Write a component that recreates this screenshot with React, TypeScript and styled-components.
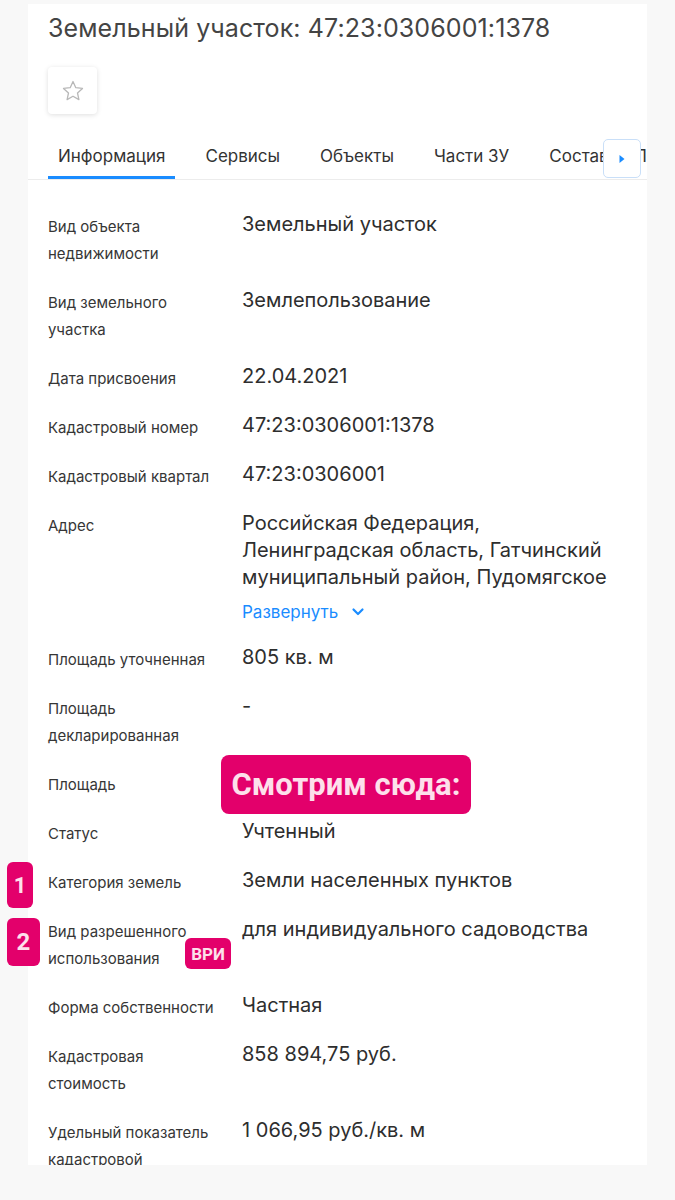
import React from 'react';
import styled, { createGlobalStyle } from 'styled-components';

const GlobalStyle = createGlobalStyle`
  html, body {
    margin: 0;
    padding: 0;
    background: #f8f8f8;
  }
  body {
    font-family: Inter, "Noto Sans", "Liberation Sans", sans-serif;
    color: #333;
  }
`;

const Page = styled.div`
  width: 675px;
  height: 1200px;
  padding: 4px 28px 0;
  box-sizing: border-box;
  background: #f8f8f8;
  overflow: hidden;
`;

const Card = styled.div`
  background: #fff;
  height: 1161px;
  clip-path: inset(0 0 0 -30px);
`;

const Header = styled.div`
  padding: 8px 20px 0;
`;

const Title = styled.h1`
  margin: 0;
  font-size: 25px;
  line-height: 32px;
  font-weight: 400;
  color: #444;
  letter-spacing: 0.1px;
`;

const StarButton = styled.button`
  margin-top: 23px;
  width: 49px;
  height: 47px;
  border: 0;
  border-radius: 4px;
  background: #fff;
  box-shadow: 0 1px 5px rgba(0, 0, 0, 0.13);
  display: flex;
  align-items: center;
  justify-content: center;
  padding: 0;
`;

const TabsWrap = styled.div`
  position: relative;
  margin-top: 19px;
  border-bottom: 1px solid #ececec;
`;

const TabList = styled.div`
  display: flex;
  gap: 20px;
  padding-left: 20px;
  white-space: nowrap;
  overflow: hidden;
`;

const Tab = styled.div<{ $active?: boolean }>`
  padding: 12px 10px 9px;
  font-size: 17px;
  line-height: 22px;
  color: #333;
  border-bottom: 3px solid ${(p) => (p.$active ? '#1a8cff' : 'transparent')};
`;

const ScrollButton = styled.button`
  position: absolute;
  left: 575px;
  top: 6px;
  width: 38px;
  height: 39px;
  border: 1px solid #c9dff8;
  border-radius: 5px;
  background: #fff;
  display: flex;
  align-items: center;
  justify-content: center;
  padding: 0;
`;

const InfoList = styled.div`
  padding: 33px 20px 0;
  display: flex;
  flex-direction: column;
  gap: 22px;
`;

const Row = styled.div`
  position: relative;
  display: grid;
  grid-template-columns: 194px 1fr;
`;

const Label = styled.div`
  font-size: 15px;
  line-height: 27px;
  color: #363636;
  padding-right: 24px;
`;

const Value = styled.div`
  font-size: 20px;
  line-height: 27px;
  color: #2e2e2e;
  margin-top: -2px;
`;

const ExpandLink = styled.div`
  margin-top: 9px;
  font-size: 17px;
  line-height: 24px;
  color: #1a8cff;
  display: flex;
  align-items: center;
  gap: 13px;
`;

const Callout = styled.div`
  position: absolute;
  left: 173px;
  top: -16px;
  width: 250px;
  height: 59px;
  border-radius: 8px;
  background: #e3006b;
  color: #fde0eb;
  font-family: Roboto, "Liberation Sans", sans-serif;
  font-weight: 700;
  font-size: 31px;
  display: flex;
  align-items: center;
  justify-content: center;
`;

const Marker = styled.div<{ $w: number; $h: number; $left: number; $top: number; $size: number }>`
  position: absolute;
  left: ${(p) => p.$left}px;
  top: ${(p) => p.$top}px;
  width: ${(p) => p.$w}px;
  height: ${(p) => p.$h}px;
  border-radius: 6px;
  background: #e3006b;
  color: #fde0eb;
  font-family: Roboto, "Liberation Sans", sans-serif;
  font-weight: 700;
  font-size: ${(p) => p.$size}px;
  display: flex;
  align-items: center;
  justify-content: center;
`;

const StarIcon = () => (
  <svg width="24" height="24" viewBox="0 0 24 24" fill="none" stroke="#b8b8b8" strokeWidth="1.3" strokeLinejoin="round">
    <path d="M12 2.5l2.8 6.2 6.7.7-5 4.6 1.4 6.6L12 17.2l-5.9 3.4 1.4-6.6-5-4.6 6.7-.7z" />
  </svg>
);

const rows: { label: string; value: string }[] = [
  { label: 'Вид объекта недвижимости', value: 'Земельный участок' },
  { label: 'Вид земельного участка', value: 'Землепользование' },
  { label: 'Дата присвоения', value: '22.04.2021' },
  { label: 'Кадастровый номер', value: '47:23:0306001:1378' },
  { label: 'Кадастровый квартал', value: '47:23:0306001' },
];

const App = () => (
  <>
    <GlobalStyle />
    <Page>
      <Card>
        <Header>
          <Title>Земельный участок: 47:23:0306001:1378</Title>
          <StarButton aria-label="В избранное">
            <StarIcon />
          </StarButton>
        </Header>

        <TabsWrap>
          <TabList>
            <Tab $active>Информация</Tab>
            <Tab>Сервисы</Tab>
            <Tab>Объекты</Tab>
            <Tab>Части ЗУ</Tab>
            <Tab>Состав ЕЗП</Tab>
          </TabList>
          <ScrollButton aria-label="Далее">
            <svg width="8" height="10" viewBox="0 0 8 10">
              <path d="M1.5 1l5 4-5 4z" fill="#1a8cff" />
            </svg>
          </ScrollButton>
        </TabsWrap>

        <InfoList>
          {rows.map((r) => (
            <Row key={r.label}>
              <Label>{r.label}</Label>
              <Value>{r.value}</Value>
            </Row>
          ))}

          <Row>
            <Label>Адрес</Label>
            <div>
              <Value>
                Российская Федерация,
                <br />
                Ленинградская область, Гатчинский
                <br />
                муниципальный район, Пудомягское
              </Value>
              <ExpandLink>
                Развернуть
                <svg width="14" height="10" viewBox="0 0 14 10" fill="none" stroke="#1a8cff" strokeWidth="2.2" strokeLinecap="round" strokeLinejoin="round">
                  <path d="M2.5 2.5L7 7l4.5-4.5" />
                </svg>
              </ExpandLink>
            </div>
          </Row>

          <Row>
            <Label>Площадь уточненная</Label>
            <Value>805 кв. м</Value>
          </Row>
          <Row>
            <Label>Площадь декларированная</Label>
            <Value>-</Value>
          </Row>
          <Row>
            <Label>Площадь</Label>
            <Value />
            <Callout>Смотрим сюда:</Callout>
          </Row>
          <Row>
            <Label>Статус</Label>
            <Value>Учтенный</Value>
          </Row>
          <Row>
            <Label>Категория земель</Label>
            <Value>Земли населенных пунктов</Value>
            <Marker $left={-41} $top={-7} $w={26} $h={46} $size={22}>1</Marker>
          </Row>
          <Row>
            <Label>Вид разрешенного использования</Label>
            <Value>для индивидуального садоводства</Value>
            <Marker $left={-41} $top={0} $w={33} $h={48} $size={24}>2</Marker>
            <Marker $left={137} $top={20} $w={46} $h={31} $size={17}>ВРИ</Marker>
          </Row>
          <Row>
            <Label>Форма собственности</Label>
            <Value>Частная</Value>
          </Row>
          <Row>
            <Label>Кадастровая стоимость</Label>
            <Value>858 894,75 руб.</Value>
          </Row>
          <Row>
            <Label>Удельный показатель кадастровой стоимости</Label>
            <Value>1 066,95 руб./кв. м</Value>
          </Row>
        </InfoList>
      </Card>
    </Page>
  </>
);

export default App;
